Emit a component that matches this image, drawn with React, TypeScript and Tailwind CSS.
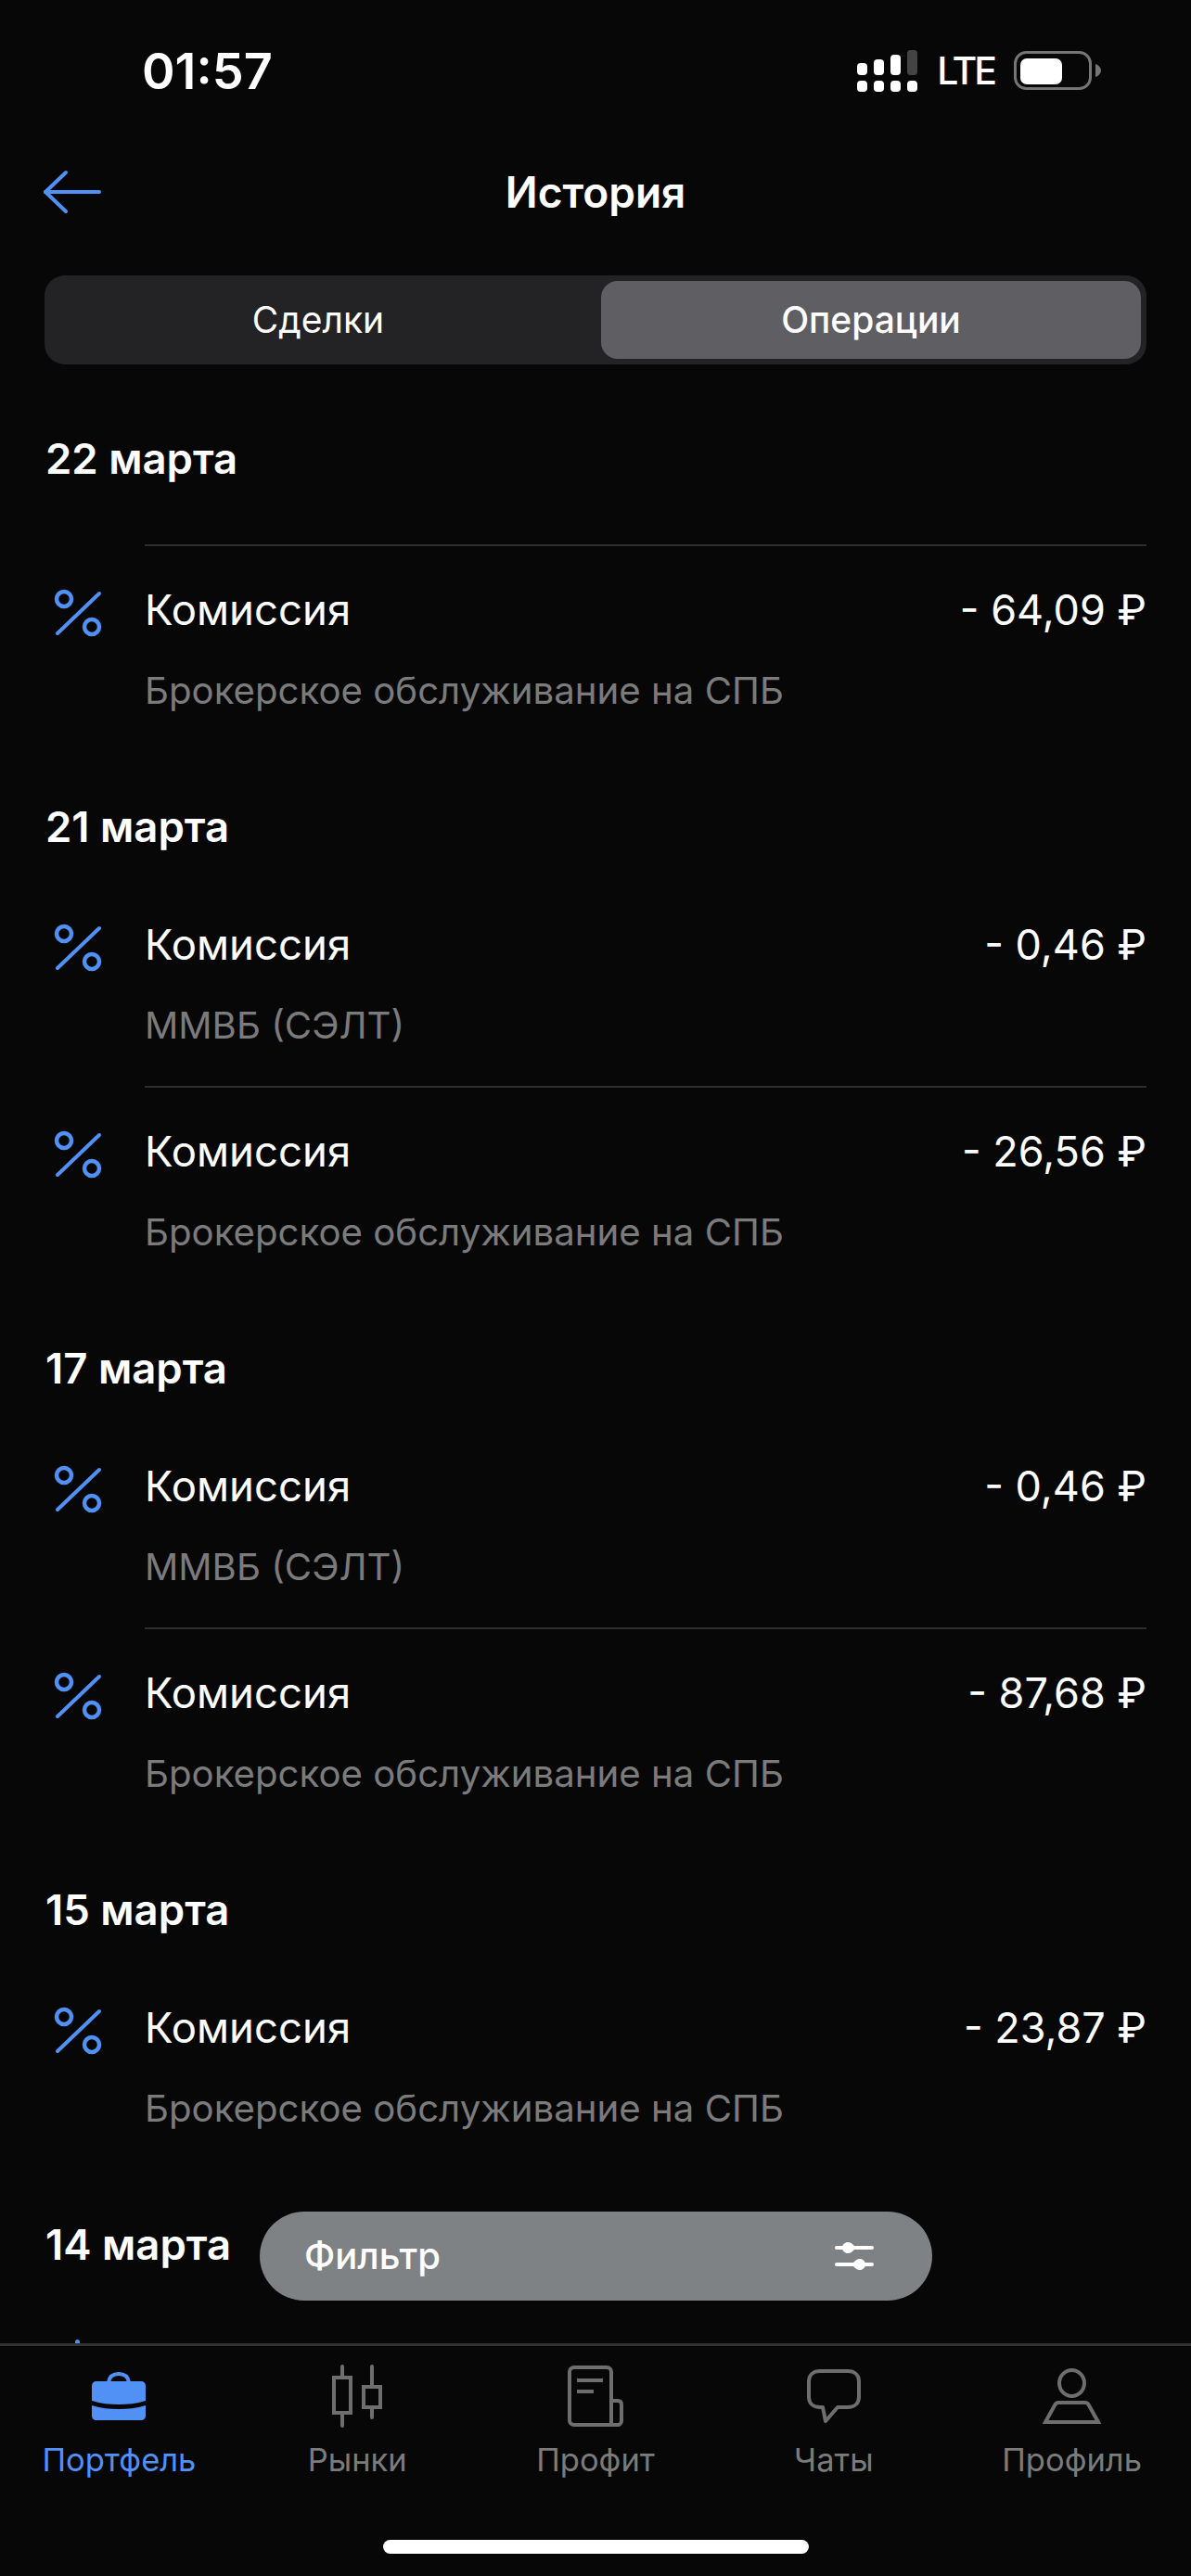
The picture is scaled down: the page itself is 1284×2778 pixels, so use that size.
import { ReactNode } from "react";

const BLUE = "#5191f5";

type Row = { amount: string; sub: string };
type Group = { date: string; rows: Row[]; gap: string };

const SPB = "Брокерское обслуживание на СПБ";
const MMVB = "ММВБ (СЭЛТ)";

const groups: Group[] = [
  { date: "22 марта", gap: "mt-[64px]", rows: [{ amount: "- 64,09 ₽", sub: SPB }] },
  {
    date: "21 марта",
    gap: "mt-[28px]",
    rows: [
      { amount: "- 0,46 ₽", sub: MMVB },
      { amount: "- 26,56 ₽", sub: SPB },
    ],
  },
  {
    date: "17 марта",
    gap: "mt-[28px]",
    rows: [
      { amount: "- 0,46 ₽", sub: MMVB },
      { amount: "- 87,68 ₽", sub: SPB },
    ],
  },
  { date: "15 марта", gap: "mt-[28px]", rows: [{ amount: "- 23,87 ₽", sub: SPB }] },
];

const PercentIcon = () => (
  <svg width="52" height="52" viewBox="0 0 52 52" fill="none" stroke={BLUE} strokeWidth="4.5">
    <circle cx="11" cy="11" r="8" />
    <circle cx="41" cy="41" r="8" />
    <path d="M49 5 L4 48" strokeLinecap="round" strokeWidth="4" />
  </svg>
);

const BackArrow = () => (
  <svg width="64" height="48" viewBox="0 0 64 48" fill="none" stroke={BLUE} strokeWidth="4" strokeLinecap="round" strokeLinejoin="round">
    <path d="M3 24 H61" />
    <path d="M25 3 L3 24 L25 45" />
  </svg>
);

const SignalIcon = () => (
  <svg width="65" height="45" viewBox="0 0 65 45" fill="#fff">
    <rect x="0" y="14" width="11" height="13" rx="4" />
    <rect x="18" y="10" width="11" height="17" rx="4" />
    <rect x="36" y="5" width="11" height="22" rx="4" />
    <rect x="54" y="0" width="11" height="27" rx="3.5" fill="#444" />
    <rect x="0" y="33" width="11" height="12" rx="4" />
    <rect x="18" y="33" width="11" height="12" rx="4" />
    <rect x="36" y="33" width="11" height="12" rx="4" />
    <rect x="54" y="33" width="11" height="12" rx="4" />
  </svg>
);

const BatteryIcon = () => (
  <svg width="94" height="42" viewBox="0 0 94 42" fill="none">
    <rect x="1.5" y="1.5" width="81" height="39" rx="12" stroke="#757575" strokeWidth="3" />
    <rect x="7" y="8" width="45" height="28" rx="7" fill="#fff" />
    <path d="M88 14 C91 15 94 18 94 21 C94 24 91 27 88 28 Z" fill="#757575" />
  </svg>
);

const FilterIcon = () => (
  <svg width="42" height="30" viewBox="0 0 42 30" fill="#fff">
    <rect x="0" y="4" width="42" height="4" rx="2" />
    <rect x="0" y="22" width="42" height="4" rx="2" />
    <path d="M8 6 C8 2.5 11 0 14 0 C17 0 19 2 21 4 L24 6 L21 8 C19 10 17 12 14 12 C11 12 8 9.5 8 6 Z" />
    <path d="M33 24 C33 20.5 30 18 27 18 C24 18 22 20 20 22 L17 24 L20 26 C22 28 24 30 27 30 C30 30 33 27.5 33 24 Z" />
  </svg>
);

const BriefcaseIcon = () => (
  <svg width="58" height="52" viewBox="0 0 58 52" fill={BLUE}>
    <path d="M18 11 C19 5 23 2 29 2 C35 2 39 5 40 11" fill="none" stroke={BLUE} strokeWidth="4" />
    <path d="M5 10 H53 C56 10 58 12 58 15 V31 C48 34 39 35 29 35 C19 35 10 34 0 31 V15 C0 12 2 10 5 10 Z" />
    <path d="M0 36 C10 39 19 40 29 40 C39 40 48 39 58 36 V47 C58 50 56 52 53 52 H5 C2 52 0 50 0 47 Z" />
  </svg>
);

const gray = "#6e6e6e";

const MarketsIcon = () => (
  <svg width="54" height="68" viewBox="0 0 54 68" fill="none" stroke={gray} strokeWidth="4">
    <path d="M11 2 V14 M11 52 V66 M43 2 V23 M43 46 V57" strokeLinecap="round" />
    <rect x="2" y="14" width="18" height="38" />
    <rect x="34" y="24" width="18" height="22" />
  </svg>
);

const ProfitIcon = () => (
  <svg width="60" height="66" viewBox="0 0 60 66" fill="none" stroke={gray} strokeWidth="4">
    <path d="M54 64 H7 C4 64 2 62 2 59 V7 C2 4 4 2 7 2 H42 C45 2 47 4 47 7 V62" strokeLinejoin="round" />
    <path d="M47 38 H54 C57 38 58 40 58 42 V60 C58 62 56 64 54 64" />
    <path d="M10 16 H38" />
    <path d="M10 28 H28" />
  </svg>
);

const ChatIcon = () => (
  <svg width="58" height="58" viewBox="0 0 58 58" fill="none" stroke={gray} strokeWidth="4" strokeLinejoin="round">
    <path d="M14 2 H44 C51 2 56 6 56 13 V30 C56 37 51 41 44 41 H33 L20 56 L17 41 H14 C7 41 2 37 2 30 V13 C2 6 7 2 14 2 Z" />
  </svg>
);

const ProfileIcon = () => (
  <svg width="63" height="60" viewBox="0 0 63 60" fill="none" stroke={gray} strokeWidth="4">
    <ellipse cx="31.5" cy="16" rx="13.5" ry="14" />
    <path d="M3 58 L13 40 C14 38 15 37 17 37 H46 C48 37 49 38 50 40 L60 58 Z" />
  </svg>
);

const tabs: { label: string; icon: ReactNode; active?: boolean }[] = [
  { label: "Портфель", icon: <BriefcaseIcon />, active: true },
  { label: "Рынки", icon: <MarketsIcon /> },
  { label: "Профит", icon: <ProfitIcon /> },
  { label: "Чаты", icon: <ChatIcon /> },
  { label: "Профиль", icon: <ProfileIcon /> },
];

const Operation = ({ row, line }: { row: Row; line: boolean }) => (
  <div className="flex h-[223px] pl-[58px] pr-[48px]">
    <div className="w-[98px] shrink-0 pt-[48px]">
      <PercentIcon />
    </div>
    <div className={`flex-1 border-t-2 ${line ? "border-[#2e2e2f]" : "border-transparent"}`}>
      <div className="mt-[41px] flex items-center justify-between leading-[56px] text-white">
        <span className="text-[45.5px]">Комиссия</span>
        <span className="text-[45px]">{row.amount}</span>
      </div>
      <div className="mt-[31px] text-[40.2px] leading-[56px] text-[#7b7b7b]">{row.sub}</div>
    </div>
  </div>
);

export default function App() {
  return (
    <div className="relative flex h-[2778px] w-[1284px] flex-col overflow-hidden bg-[#070708] font-['Inter',sans-serif] text-white">
      <div className="flex h-[150px] items-start justify-between pt-[47px] pl-[153px] pr-[97px]">
        <span className="text-[54px] leading-[60px] font-semibold">01:57</span>
        <div className="flex items-center gap-[21px] pt-[6px]">
          <SignalIcon />
          <span className="text-[41px] leading-[46px] font-medium tracking-[-3px]">LTE</span>
          <BatteryIcon />
        </div>
      </div>

      <div className="relative flex h-[114px] items-center justify-center">
        <span className="absolute left-[46px] top-[33px]">
          <BackArrow />
        </span>
        <span className="text-[46px] font-semibold">История</span>
      </div>

      <div className="mx-[48px] mt-[33px] flex h-[96px] rounded-[22px] bg-[#232325] p-[6px]">
        <div className="flex flex-1 items-center justify-center pr-[16px] text-[39px]">Сделки</div>
        <div className="flex w-[582px] items-center justify-center rounded-[18px] bg-[#5f5f63] text-[39px] font-medium">
          Операции
        </div>
      </div>

      <div className="flex flex-1 flex-col gap-[54px] overflow-hidden pt-[74px]">
        {groups.map((g) => (
          <div key={g.date}>
            <div className="flex h-[56px] items-center pl-[49px] text-[45.5px] font-semibold">{g.date}</div>
            <div className={g.gap}>
              {g.rows.map((r, i) => (
                <Operation key={i} row={r} line={i > 0 || g.gap === "mt-[64px]"} />
              ))}
            </div>
          </div>
        ))}
        <div>
          <div className="flex h-[56px] items-center pl-[49px] text-[45.5px] font-semibold">14 марта</div>
          {/* next row is cut off by the tab bar, only the tip of its icon shows */}
          <div className="mt-[74px] ml-[81px] h-[20px] w-[5px] rounded-full bg-[#5191f5]" />
        </div>
      </div>

      <div className="z-10 flex h-[251px] flex-col border-t-[3px] border-[#323233] bg-[#070708]">
        <div className="grid grid-cols-5 pt-[18px]">
          {tabs.map((t) => (
            <div key={t.label} className="flex flex-col items-center">
              <div className="flex h-[72px] items-center justify-center">{t.icon}</div>
              <div className={`mt-[13px] text-[34.5px] leading-[40px] ${t.active ? "text-[#5191f5]" : "text-[#7b7b7b]"}`}>
                {t.label}
              </div>
            </div>
          ))}
        </div>
      </div>

      <div className="absolute left-[280px] top-[2385px] z-20 flex h-[96px] w-[725px] items-center justify-between rounded-[48px] bg-[#7f8285] pl-[48px] pr-[63px]">
        <span className="text-[40px] font-medium">Фильтр</span>
        <FilterIcon />
      </div>

      <div className="absolute left-[413px] top-[2739px] z-20 h-[15px] w-[459px] rounded-full bg-white" />
    </div>
  );
}
